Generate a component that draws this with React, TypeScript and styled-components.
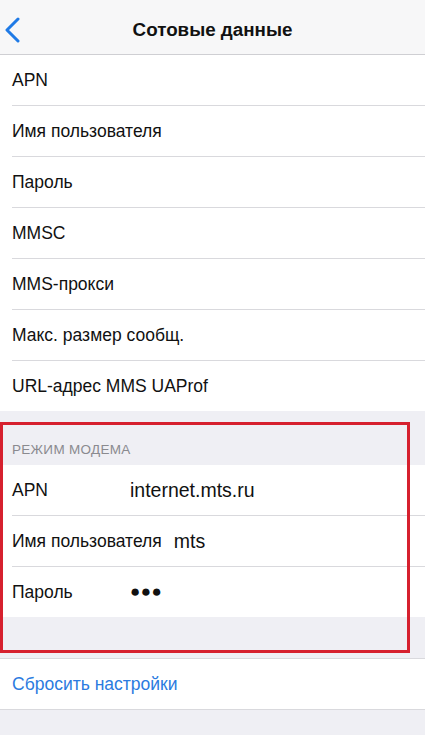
import React from 'react';
import styled, {createGlobalStyle} from 'styled-components';

const GlobalStyle = createGlobalStyle`
    html, body {
        margin: 0;
        padding: 0;
        background: #efeff4;
        font-family: "Liberation Sans", Arial, sans-serif;
        -webkit-font-smoothing: antialiased;
    }
`;

const Screen = styled.div`
    width: 425px;
    min-height: 735px;
    background: #efeff4;
    display: flex;
    flex-direction: column;
`;

const NavBar = styled.div`
    height: 54px;
    display: flex;
    align-items: center;
    justify-content: center;
    position: relative;
    background: #f7f7f8;
    border-bottom: 1px solid #cfcfd3;
`;

const BackButton = styled.div`
    position: absolute;
    left: 4px;
    top: 17px;
    display: flex;
`;

const Title = styled.div`
    font-size: 18.8px;
    font-weight: 700;
    color: #111;
    margin-top: 6px;
`;

const Group = styled.div`
    background: #fff;
    display: flex;
    flex-direction: column;
`;

const Row = styled.div`
    height: 50px;
    display: flex;
    align-items: center;
    padding-left: 12px;
    position: relative;

    & + &::before {
        content: '';
        position: absolute;
        top: -1px;
        left: 12px;
        right: 0;
        border-top: 1px solid #d9d9dd;
    }
    & + & {
        margin-top: 1px;
    }
`;

const Label = styled.span<{$width?: number}>`
    font-size: 17.5px;
    color: #111;
    min-width: ${p => p.$width ?? 0}px;
`;

const Value = styled.span`
    font-size: 19.5px;
    color: #111;
    margin-left: 12px;
`;

const Dots = styled.span`
    font-size: 17px;
    letter-spacing: 0.5px;
    color: #111;
    margin-left: 12px;
`;

const ModemBlock = styled.div`
    position: relative;
    display: flex;
    flex-direction: column;
`;

const SectionHeader = styled.div`
    height: 54px;
    box-sizing: border-box;
    padding: 0 12px 8px;
    display: flex;
    align-items: flex-end;
    font-size: 13.5px;
    letter-spacing: 0.3px;
    color: #8a8a8f;
`;

const Spacer = styled.div`
    height: 41px;
    border-bottom: 1px solid #d9d9dd;
`;

const Highlight = styled.div`
    position: absolute;
    top: 11px;
    left: 0;
    width: 410px;
    bottom: 6px;
    box-sizing: border-box;
    border: 3px solid #d6202e;
    pointer-events: none;
`;

const ResetRow = styled(Row)`
    border-bottom: 1px solid #d9d9dd;
`;

const LinkText = styled.span`
    font-size: 17.5px;
    color: #2b7be0;
`;

const Chevron = () => (
    <svg width="18" height="26" viewBox="0 0 18 26" fill="none">
        <path d="M14 2 L3 13 L14 24" stroke="#1f7ae6" strokeWidth="3" strokeLinecap="round" strokeLinejoin="round" />
    </svg>
);

const apnRows = ['APN', 'Имя пользователя', 'Пароль', 'MMSC', 'MMS-прокси', 'Макс. размер сообщ.', 'URL-адрес MMS UAProf'];

const App: React.FC = () => {
    return (
        <>
            <GlobalStyle />
            <Screen>
                <NavBar>
                    <BackButton>
                        <Chevron />
                    </BackButton>
                    <Title>Сотовые данные</Title>
                </NavBar>
                <Group>
                    {apnRows.map(label => (
                        <Row key={label}>
                            <Label>{label}</Label>
                        </Row>
                    ))}
                </Group>
                <ModemBlock>
                    <SectionHeader>РЕЖИМ МОДЕМА</SectionHeader>
                    <Group>
                        <Row>
                            <Label $width={106}>APN</Label>
                            <Value>internet.mts.ru</Value>
                        </Row>
                        <Row>
                            <Label $width={106}>Имя пользователя</Label>
                            <Value>mts</Value>
                        </Row>
                        <Row>
                            <Label $width={106}>Пароль</Label>
                            <Dots>●●●</Dots>
                        </Row>
                    </Group>
                    <Spacer />
                    <Highlight />
                </ModemBlock>
                <Group>
                    <ResetRow>
                        <LinkText>Сбросить настройки</LinkText>
                    </ResetRow>
                </Group>
            </Screen>
        </>
    );
};

export default App;
